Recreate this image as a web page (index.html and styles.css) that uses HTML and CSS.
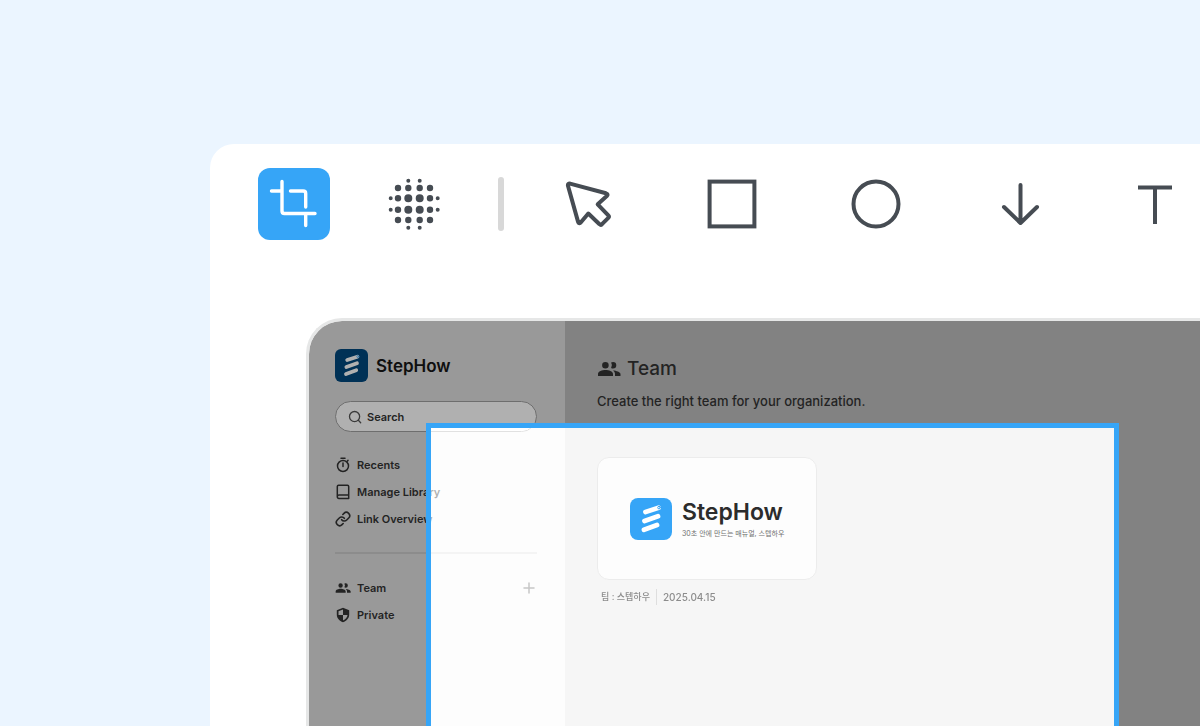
FILE: index.html
```html
<!DOCTYPE html>
<html lang="ko">
  <head>
    <meta charset="utf-8" />
    <meta name="viewport" content="width=device-width, initial-scale=1.0" />
    <title>StepHow</title>
    <link rel="stylesheet" href="styles.css">
  </head>
  <body>
    <svg class="symbols" width="0" height="0" aria-hidden="true">
      <symbol id="steps" viewBox="0 0 42 42">
        <g stroke="currentColor" stroke-width="4.8" stroke-linecap="round">
          <path d="M15.500 14L28.500 9.800" />
          <path d="M14.500 23L28 18.200" />
          <path d="M14 31.800L27 27" />
        </g>
        <circle cx="29" cy="9.600" r="1.300" fill="none" stroke-width="1" />
      </symbol>
      <symbol id="people" viewBox="0 0 24 24">
        <path fill="currentColor" d="M8.400 11.500a3.300 3.300 0 1 0 0-6.600 3.300 3.300 0 0 0 0 6.600zM16 11.500a3.300 3.300 0 1 0 0-6.600c-.7 0-1.300.2-1.900.6a5 5 0 0 1 0 5.400c.6.400 1.200.6 1.900.6zM1 19v-1.900c0-2.600 4.100-4 7.500-4s7.500 1.400 7.500 4V19zM18 19v-1.900c0-1.600-.8-2.800-2-3.700 3.200.2 7.500 1.300 7.500 3.700V19z" />
      </symbol>
    </svg>

    <div class="editor">
      <div class="toolbar">
        <button class="tool active" aria-label="Crop">
          <svg viewBox="0 0 72 72" stroke-width="3.4">
            <path d="M24 13.500V43q0 2.500 2.500 2.500H57M13.500 23H24M32.500 23H45.200q2.500 0 2.500 2.500V39M47.700 46V57.500" />
          </svg>
        </button>
        <button class="tool" aria-label="Blur">
          <svg viewBox="0 0 72 72" stroke-width="4">
            <path d="M30.300 12.700h0M41.700 12.700h0M12.700 30.300h0M59.700 30.300h0M12.700 41.700h0M59.700 41.700h0M30.300 59.700h0M41.700 59.700h0" />
            <path stroke-width="6.400" d="M20 20h0M30.300 20h0M41.700 20h0M52 20h0M20 30.300h0M52 30.300h0M20 41.700h0M52 41.700h0M20 52h0M30.300 52h0M41.700 52h0M52 52h0" />
            <path stroke-width="8" d="M30.300 30.300h0M41.700 30.300h0M30.300 41.700h0M41.700 41.700h0" />
          </svg>
        </button>
        <span class="toolbar-divider"></span>
        <div class="shape-tools">
          <button class="tool" aria-label="Select">
            <svg viewBox="0 0 72 72" stroke-width="4">
              <path d="M18 15.600L54 25.300q2.700.9.800 2.800L45.700 36.300L56.300 47.300q1.200 1.300 0 2.500L50 56.200q-1.300 1.200-2.500 0L36.300 45.500L28.500 54.700q-1.700 1.300-2.400-.8L15.900 17.500q-.2-2 2.100-1.900z" />
            </svg>
          </button>
          <button class="tool" aria-label="Rectangle">
            <svg viewBox="0 0 72 72" stroke-width="4"><rect x="13.600" y="13.600" width="44.800" height="44.800" /></svg>
          </button>
          <button class="tool" aria-label="Ellipse">
            <svg viewBox="0 0 72 72" stroke-width="4"><circle cx="36" cy="36" r="22.500" /></svg>
          </button>
          <button class="tool" aria-label="Arrow">
            <svg viewBox="0 0 72 72" stroke-width="4"><path d="M36.500 17V55M20 39L36.500 55L53 39" /></svg>
          </button>
          <button class="tool" aria-label="Text">
            <svg class="square-caps" viewBox="0 0 72 72" stroke-width="4"><path d="M10 19.500H44M27 19.500V56" /></svg>
          </button>
        </div>
      </div>

      <div class="workspace">
        <div class="capture">
          <aside class="sidebar">
            <div class="brand">
              <svg class="brand-logo"><use href="#steps" /></svg>
              <span>StepHow</span>
            </div>
            <label class="search">
              <svg viewBox="0 0 16 16"><circle cx="7.500" cy="7.500" r="5.800" /><path d="M11.800 11.800L14.500 14.500" /></svg>
              <input type="search" placeholder="Search" aria-label="Search" />
            </label>
            <nav class="nav">
              <a href="#">
                <svg viewBox="0 0 16 16"><circle cx="8" cy="9" r="5.500" /><path d="M6 1.200H10M8 6V9.500M12.200 4.200L13 3.400" /></svg>
                Recents
              </a>
              <a href="#">
                <svg viewBox="0 0 16 16"><path d="M3.500 1.200H12.500q1.200 0 1.200 1.200V14.500H4q-1.700 0-1.700-1.700V2.400q0-1.200 1.200-1.200zM2.300 12.800q0-1.700 1.700-1.700H13.700" /></svg>
                Manage Library
              </a>
              <a href="#">
                <svg viewBox="0 0 24 24"><path stroke-width="2.400" d="M10 13a5 5 0 0 0 7.540.54l3-3a5 5 0 0 0-7.070-7.070l-1.720 1.710M14 11a5 5 0 0 0-7.540-.54l-3 3a5 5 0 0 0 7.070 7.070l1.710-1.710" /></svg>
                Link Overview
              </a>
            </nav>
            <nav class="nav spaces">
              <div class="nav-row">
                <a href="#">
                  <svg class="solid"><use href="#people" /></svg>
                  Team
                </a>
                <button class="add" aria-label="Add team">
                  <svg viewBox="0 0 16 16"><path d="M8 3V13M3 8H13" /></svg>
                </button>
              </div>
              <a href="#">
                <svg class="solid" viewBox="0 0 16 16"><path fill="currentColor" fill-rule="evenodd" d="M8 .8L14.200 3.300V7.500c0 3.800-2.700 6.600-6.200 7.700C4.500 14.100 1.800 11.300 1.800 7.500V3.300zM8 2.500L3.500 4.300V8H8zM8 8V13.500c2.500-1 4.200-2.900 4.500-5.500z" /></svg>
                Private
              </a>
            </nav>
          </aside>

          <main class="content">
            <h1><svg><use href="#people" /></svg>Team</h1>
            <p class="lead">Create the right team for your organization.</p>
            <a class="card" href="#">
              <svg class="card-logo"><use href="#steps" /></svg>
              <span class="card-text">
                <strong>StepHow</strong>
                <small>30초 안에 만드는 매뉴얼, 스텝하우</small>
              </span>
            </a>
            <div class="meta">
              <span>팀 : 스텝하우</span>
              <time datetime="2025-04-15">2025.04.15</time>
            </div>
          </main>

          <div class="selection"></div>
        </div>
      </div>
    </div>
  </body>
</html>
```
FILE: styles.css
```css
:root {
  --page-color: #ebf5ff;
  --accent-color: #36a5f7;
  --icon-color: #464c53;
  --text-color: #343434;
}

* {
  box-sizing: border-box;
}

body {
  margin: 0;
  padding: 144px 0 0 210px;
  height: 100vh;
  overflow: hidden;
  background-color: var(--page-color);
  color: var(--text-color);
  font-family: "Inter", "Noto Sans CJK KR", sans-serif;
}

button {
  padding: 0;
  border: none;
  background: none;
  cursor: pointer;
}

a {
  color: inherit;
  text-decoration: none;
}

svg {
  display: block;
  flex-shrink: 0;
  fill: none;
  stroke-linecap: round;
  stroke-linejoin: round;
}

.symbols {
  position: absolute;
}

.editor {
  display: flex;
  flex-direction: column;
  height: 100%;
  background-color: #fff;
  border-top-left-radius: 24px;
}

/* Toolbar */
.toolbar {
  display: flex;
  align-items: center;
  gap: 48px;
  padding: 24px 48px;
}

.tool {
  flex-shrink: 0;
  width: 72px;
  height: 72px;
  border-radius: 12px;
  color: var(--icon-color);
}

.tool svg {
  stroke: currentColor;
}

.tool.active {
  background-color: var(--accent-color);
  color: #fff;
}

.tool rect {
  stroke-linejoin: miter;
}

.tool .square-caps {
  stroke-linecap: butt;
}

.toolbar-divider {
  flex-shrink: 0;
  width: 6px;
  height: 54px;
  border-radius: 3px;
  background-color: #d8d8d8;
}

.shape-tools {
  display: flex;
  gap: 72px;
}

/* Captured screen */
.workspace {
  display: flex;
  flex: 1;
  padding: 54px 0 0 96px;
}

.capture {
  position: relative;
  display: flex;
  flex: 1;
  overflow: hidden;
  border: 3px solid #e6e7e7;
  border-width: 3px 0 0 3px;
  border-top-left-radius: 36px;
}

.sidebar {
  width: 256px;
  padding: 28px 28px 0 26px;
  background-color: #dedede;
}

.brand {
  display: flex;
  align-items: center;
  gap: 8px;
  color: #161616;
  font-size: 17px;
  font-weight: 600;
}

.brand-logo {
  width: 33px;
  height: 33px;
  border-radius: 6px;
  background-color: #00477d;
  color: #fff;
}

.brand-logo,
.card-logo {
  stroke: var(--accent-color);
}

.search {
  display: flex;
  align-items: center;
  gap: 5px;
  height: 31px;
  margin-top: 19px;
  padding: 0 12px;
  border: 1px solid #a0a0a0;
  border-radius: 16px;
  background-color: #fff;
}

.search svg {
  width: 14px;
  height: 14px;
  stroke: #555;
  stroke-width: 1.5;
}

.search input {
  width: 100%;
  min-width: 0;
  padding: 0;
  border: none;
  outline: none;
  background: none;
  font: 600 11px "Inter", sans-serif;
}

.search input::placeholder {
  color: var(--text-color);
}

.nav {
  margin-top: 19px;
  font-size: 11px;
  font-weight: 600;
}

.nav a {
  display: flex;
  align-items: center;
  gap: 6px;
  height: 27px;
  white-space: nowrap;
}

.nav svg {
  width: 16px;
  height: 16px;
  stroke: currentColor;
  stroke-width: 1.5;
}

.nav .solid {
  stroke: none;
}

.spaces {
  margin-top: 20px;
  padding-top: 20px;
  border-top: 2px solid #cbcbcb;
}

.nav-row {
  display: flex;
  align-items: center;
  justify-content: space-between;
}

.add {
  color: #666;
}

.content {
  flex: 1;
  padding: 32px;
  background-color: #bdbdbd;
}

.content h1 {
  display: flex;
  align-items: center;
  gap: 6px;
  margin: 0;
  font-size: 19px;
  font-weight: 500;
  line-height: 32px;
}

.content h1 svg {
  width: 24px;
  height: 24px;
}

.lead {
  margin: 4px 0 0;
  font-size: 13px;
  font-weight: 500;
  line-height: 24px;
}

/* The card stays readable above the crop area */
.card,
.meta {
  position: relative;
  z-index: 2;
}

.card {
  display: flex;
  align-items: center;
  gap: 10px;
  width: 220px;
  height: 123px;
  margin-top: 44px;
  padding-left: 32px;
  border: 1px solid #ececec;
  border-radius: 12px;
  background-color: #fdfdfd;
}

.card-logo {
  width: 42px;
  height: 42px;
  border-radius: 8px;
  background-color: var(--accent-color);
  color: #fff;
}

.card-text {
  display: flex;
  flex-direction: column;
  padding-top: 3px;
  color: #2c2c2c;
  white-space: nowrap;
}

.card-text strong {
  font-size: 23px;
  font-weight: 600;
  line-height: 28px;
}

.card-text small {
  color: #707070;
  font-size: 7px;
  line-height: 16px;
}

.meta {
  display: flex;
  align-items: center;
  margin-top: 9px;
  padding-left: 4px;
  color: #8c8c8c;
  font-size: 9px;
  font-weight: 500;
  line-height: 16px;
}

.meta time {
  margin-left: 6px;
  padding-left: 6px;
  border-left: 1px solid #dedede;
  font-size: 10px;
}

/* Crop area, everything around it is dimmed */
.selection {
  position: absolute;
  z-index: 1;
  top: 102px;
  bottom: -5px;
  left: 117px;
  width: 693px;
  border: 5px solid var(--accent-color);
  background: linear-gradient(
    to right,
    rgba(255, 255, 255, 0.6) 134px,
    rgba(255, 255, 255, 0.79) 134px
  );
  backdrop-filter: brightness(1.12);
  box-shadow: 0 0 0 2000px rgba(0, 0, 0, 0.31);
}
```
